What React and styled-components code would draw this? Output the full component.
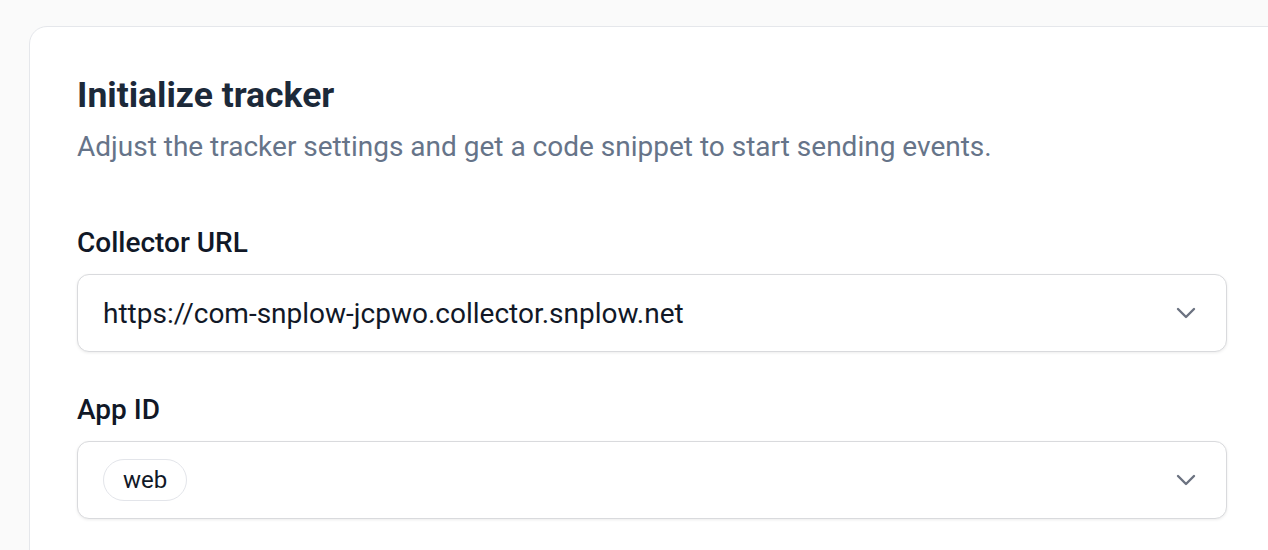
import styled, { createGlobalStyle } from 'styled-components'

const Global = createGlobalStyle`
  html, body {
    margin: 0;
    padding: 0;
    background: #fafafa;
    overflow: hidden;
    font-family: Roboto, "Noto Sans", sans-serif;
  }
`

const Page = styled.div`
  padding: 26px 0 0 29px;
  height: 550px;
  box-sizing: border-box;
`

const Card = styled.section`
  width: 1400px;
  min-height: 700px;
  box-sizing: border-box;
  background: #fff;
  border: 1.5px solid #e5e7eb;
  border-radius: 18px;
  padding: 48px 47px;
`

const Title = styled.h1`
  margin: 0;
  font-size: 35.5px;
  line-height: 40px;
  font-weight: 700;
  color: #1c2939;
`

const Subtitle = styled.p`
  margin: 12px 0 0;
  font-size: 28px;
  line-height: 40px;
  color: #667489;
`

const Form = styled.div`
  margin-top: 58px;
  width: 1150px;
  display: flex;
  flex-direction: column;
  gap: 40px;
`

const Field = styled.div`
  display: flex;
  flex-direction: column;
  gap: 13px;
`

const Label = styled.label`
  font-size: 28px;
  line-height: 36px;
  font-weight: 500;
  color: #111827;
`

const Select = styled.div`
  height: 78px;
  box-sizing: border-box;
  border: 1.5px solid #d9dadd;
  border-radius: 12px;
  box-shadow: 0 1px 3px rgba(0, 0, 0, 0.08);
  display: flex;
  align-items: center;
  justify-content: space-between;
  padding: 0 30px 0 25px;
  background: #fff;
`

const Value = styled.span`
  font-size: 28px;
  color: #111827;
`

const Chip = styled.span`
  display: inline-flex;
  align-items: center;
  height: 42px;
  box-sizing: border-box;
  padding: 0 19px;
  border: 1.5px solid #e3e5ea;
  border-radius: 21px;
  font-size: 24px;
  color: #111827;
`

const Chevron = () => (
  <svg width="20" height="12" viewBox="0 0 20 12" fill="none">
    <path d="M2 2l8 8 8-8" stroke="#6b7280" strokeWidth="2.4" strokeLinecap="round" strokeLinejoin="round" />
  </svg>
)

export default function App() {
  return (
    <>
      <Global />
      <Page>
        <Card>
          <Title>Initialize tracker</Title>
          <Subtitle>Adjust the tracker settings and get a code snippet to start sending events.</Subtitle>
          <Form>
            <Field>
              <Label>Collector URL</Label>
              <Select>
                <Value>https://com-snplow-jcpwo.collector.snplow.net</Value>
                <Chevron />
              </Select>
            </Field>
            <Field>
              <Label>App ID</Label>
              <Select>
                <Chip>web</Chip>
                <Chevron />
              </Select>
            </Field>
          </Form>
        </Card>
      </Page>
    </>
  )
}
